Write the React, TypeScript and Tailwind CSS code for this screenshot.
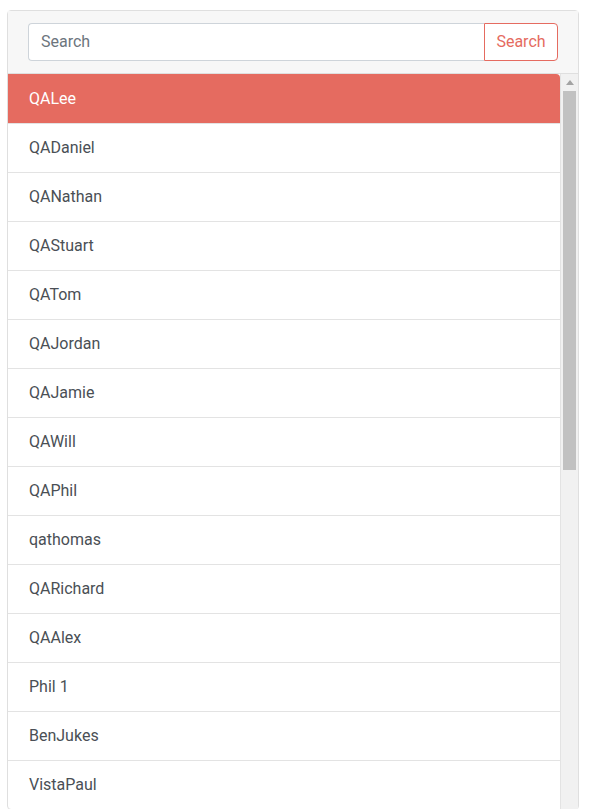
import React from "react"

const users = [
  "QALee",
  "QADaniel",
  "QANathan",
  "QAStuart",
  "QATom",
  "QAJordan",
  "QAJamie",
  "QAWill",
  "QAPhil",
  "qathomas",
  "QARichard",
  "QAAlex",
  "Phil 1",
  "BenJukes",
  "VistaPaul",
]

export default function App() {
  return (
    <div
      className="h-[809px] overflow-hidden bg-white pl-[7px] pr-[18px] pt-[10px]"
      style={{ fontFamily: "Roboto, 'Liberation Sans', sans-serif" }}
    >
      <div className="flex flex-col rounded-[4px] border border-[#dfdfdf] bg-white">
        {/* Search header */}
        <div className="border-b border-[#dfdfdf] bg-[#f7f7f7] px-5 py-3">
          <div className="flex h-[38px]">
            <input
              type="text"
              placeholder="Search"
              className="min-w-0 flex-1 rounded-l-[4px] border border-r-0 border-[#ced4da] bg-white px-3 text-base text-[#495057] outline-none placeholder:text-[#6c757d]"
            />
            <button className="w-[74px] rounded-r-[4px] border border-[#e56b60] bg-white text-base text-[#e56b60]">
              Search
            </button>
          </div>
        </div>

        {/* List + scrollbar */}
        <div className="flex">
          <ul className="flex-1 border-r border-[#e3e3e3]">
            {users.map((name, i) => (
              <li
                key={name}
                className={
                  i === 0
                    ? "flex h-[49px] items-center rounded-tr-[4px] bg-[#e56b60] px-[21px] text-base text-white"
                    : "flex h-[49px] items-center border-t border-[#e3e3e3] px-[21px] text-base text-[#4a4f55]"
                }
              >
                {name}
              </li>
            ))}
          </ul>
          <div className="flex w-[17px] flex-col bg-[#f1f1f1]">
            <div className="flex h-[17px] items-center justify-center">
              <div className="h-0 w-0 border-x-[4px] border-b-[5px] border-x-transparent border-b-[#a3a3a3]" />
            </div>
            <div className="mx-[2px] h-[379px] bg-[#c1c1c1]" />
          </div>
        </div>
      </div>
    </div>
  )
}
